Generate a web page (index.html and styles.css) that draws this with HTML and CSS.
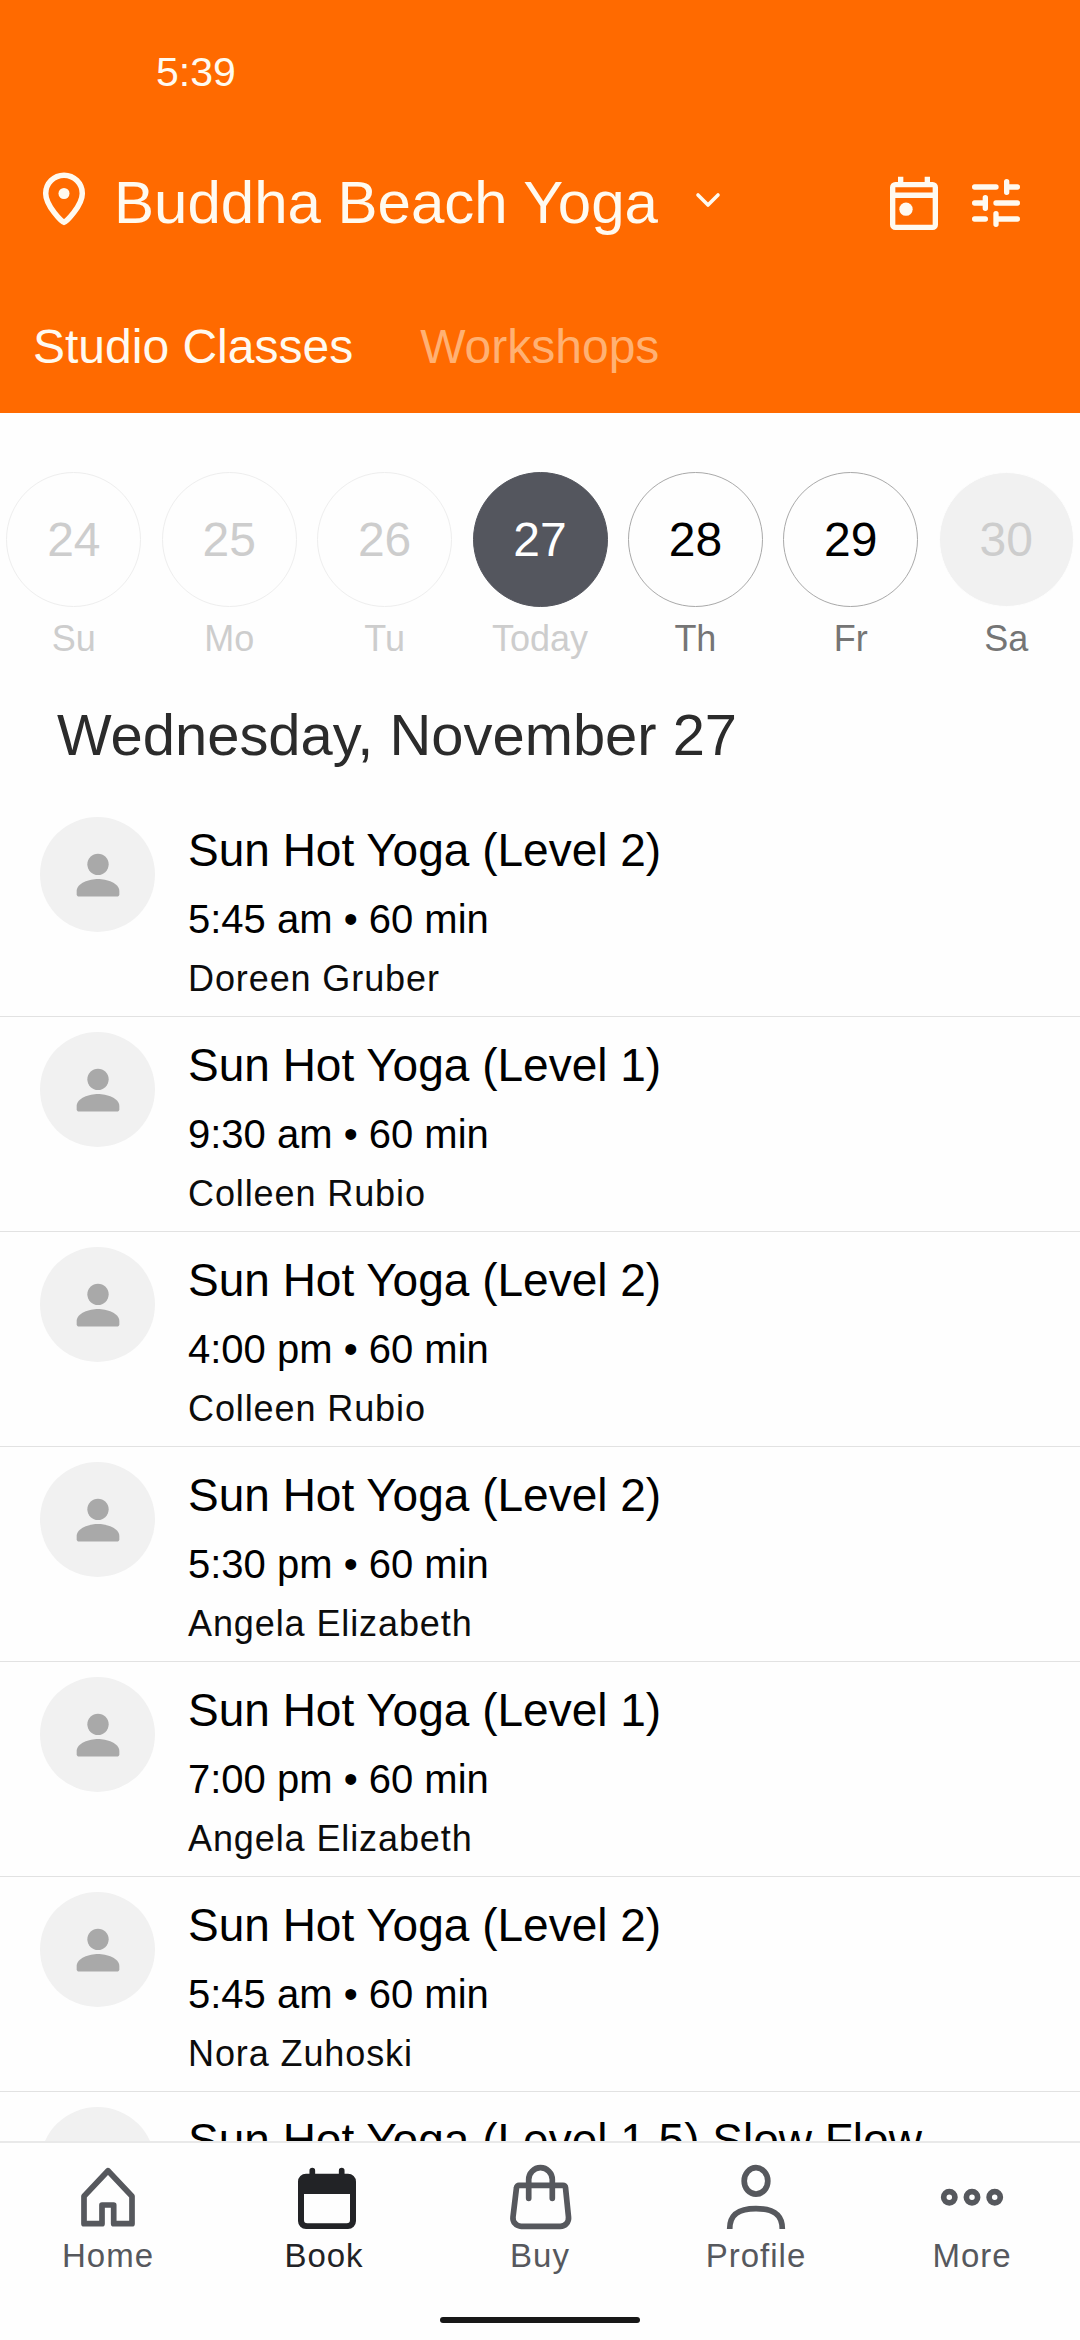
FILE: index.html
```html
<!DOCTYPE html>
<html lang="en">
<head>
<meta charset="utf-8">
<title>Buddha Beach Yoga</title>
<link rel="stylesheet" href="styles.css">
</head>
<body>
<svg class="defs" aria-hidden="true">
  <symbol id="person" viewBox="0 0 24 24">
    <circle cx="12" cy="8" r="4"/>
    <path d="M12 13.500c-3.200 0-8 1.500-8 4.500v1.200c0 .5.4.9.9.9h14.200c.5 0 .9-.4.9-.9V18c0-3-4.800-4.500-8-4.500z"/>
  </symbol>
</svg>
<div class="screen">
  <header class="header">
    <div class="status">5:39</div>
    <div class="title-row">
      <svg class="pin" viewBox="0 0 48 58"><path d="M24 50.500C22.500 50.500 5.700 34 5.700 21.500a18.300 18.300 0 0 1 36.600 0C42.300 34 25.500 50.500 24 50.500z" fill="none" stroke="currentColor" stroke-width="5.500"/><circle cx="24" cy="21.500" r="5.500" fill="currentColor"/></svg>
      <h1 class="studio">Buddha Beach Yoga</h1>
      <svg class="chevron" viewBox="0 0 30 20"><path d="M5 5l10 10L25 5" fill="none" stroke="currentColor" stroke-width="3.600" stroke-linecap="round" stroke-linejoin="round"/></svg>
      <svg class="action calendar" viewBox="0 0 24 24" fill="currentColor"><path fill-rule="evenodd" d="M19 3h-1V1h-2v2H8V1H6v2H5a2 2 0 0 0-2 2v14a2 2 0 0 0 2 2h14a2 2 0 0 0 2-2V5a2 2 0 0 0-2-2zM5 5h14v1.900H5zM5 9h14v10H5z"/><circle cx="9" cy="13.200" r="2.500"/></svg>
      <svg class="action" viewBox="0 0 24 24" fill="none" stroke="currentColor" stroke-width="2" stroke-linecap="round"><path d="M4 6h8M16 4v4M16 6h4M4 12h4M8 10v4M12 12h8M4 18h4M12 16v4M12 18h8"/></svg>
    </div>
    <nav class="tabs"><span>Studio Classes</span><span class="tab-off">Workshops</span></nav>
  </header>

  <section class="week">
    <div class="day past"><b>24</b><span>Su</span></div>
    <div class="day past"><b>25</b><span>Mo</span></div>
    <div class="day past"><b>26</b><span>Tu</span></div>
    <div class="day today"><b>27</b><span>Today</span></div>
    <div class="day"><b>28</b><span>Th</span></div>
    <div class="day"><b>29</b><span>Fr</span></div>
    <div class="day closed"><b>30</b><span>Sa</span></div>
  </section>

  <h2 class="date">Wednesday, November 27</h2>

  <main class="list">
    <article class="row"><div class="avatar"><svg><use href="#person"/></svg></div><div class="info"><h3>Sun Hot Yoga (Level 2)</h3><p class="time">5:45 am • 60 min</p><p class="teacher">Doreen Gruber</p></div></article>
    <article class="row"><div class="avatar"><svg><use href="#person"/></svg></div><div class="info"><h3>Sun Hot Yoga (Level 1)</h3><p class="time">9:30 am • 60 min</p><p class="teacher">Colleen Rubio</p></div></article>
    <article class="row"><div class="avatar"><svg><use href="#person"/></svg></div><div class="info"><h3>Sun Hot Yoga (Level 2)</h3><p class="time">4:00 pm • 60 min</p><p class="teacher">Colleen Rubio</p></div></article>
    <article class="row"><div class="avatar"><svg><use href="#person"/></svg></div><div class="info"><h3>Sun Hot Yoga (Level 2)</h3><p class="time">5:30 pm • 60 min</p><p class="teacher">Angela Elizabeth</p></div></article>
    <article class="row"><div class="avatar"><svg><use href="#person"/></svg></div><div class="info"><h3>Sun Hot Yoga (Level 1)</h3><p class="time">7:00 pm • 60 min</p><p class="teacher">Angela Elizabeth</p></div></article>
    <article class="row"><div class="avatar"><svg><use href="#person"/></svg></div><div class="info"><h3>Sun Hot Yoga (Level 2)</h3><p class="time">5:45 am • 60 min</p><p class="teacher">Nora Zuhoski</p></div></article>
    <article class="row"><div class="avatar"></div><div class="info"><h3>Sun Hot Yoga (Level 1.5) Slow Flow</h3></div></article>
  </main>

  <footer class="bottom">
    <nav class="nav">
      <div class="item"><svg viewBox="0 0 72 72"><path d="M36 10.700L60 36.300V63.700H41.700V45H30V63.700H12V36.300z"/></svg><span>Home</span></div>
      <div class="item active"><svg viewBox="0 0 72 72"><path class="solid" fill-rule="evenodd" d="M18 13.700h42a8 8 0 0 1 8 8V61a8 8 0 0 1-8 8H18a8 8 0 0 1-8-8V21.700a8 8 0 0 1 8-8zM16 34v26a3.300 3.300 0 0 0 3.300 3.300h39.400a3.300 3.300 0 0 0 3.300-3.300V34z"/><path d="M24.300 10.700v6M53.700 10.700v6"/></svg><span>Book</span></div>
      <div class="item"><svg viewBox="0 0 72 72"><path d="M24.700 38.300V19.500a11.800 11.800 0 0 1 23.600 0V38.300M15.300 25.300H59a2.500 2.500 0 0 1 2.500 2.300L64.500 57a8.300 8.300 0 0 1-8.300 9.300H17.200A8.300 8.300 0 0 1 9 57L12.500 27.600a2.500 2.500 0 0 1 2.800-2.300z"/></svg><span>Buy</span></div>
      <div class="item"><svg class="butt" viewBox="0 0 72 72"><ellipse cx="36" cy="20.900" rx="11.800" ry="13.200"/><path d="M9.700 69C9.700 54 19 48.700 36 48.700S62.300 54 62.300 69"/></svg><span>Profile</span></div>
      <div class="item"><svg viewBox="0 0 72 72"><circle cx="13.300" cy="37.300" r="5.600"/><circle cx="36" cy="37.300" r="5.600"/><circle cx="58.700" cy="37.300" r="5.600"/></svg><span>More</span></div>
    </nav>
    <div class="handle"></div>
  </footer>
</div>
</body>
</html>
```
FILE: styles.css
```css
* { box-sizing: border-box; margin: 0; padding: 0; }
body { background: #fefefe; font-family: "Liberation Sans", Arial, sans-serif; color: #000; }
h1, h2, h3, b { font-weight: 400; }
svg { display: block; flex: none; }
.defs { display: none; }
.screen { width: 1080px; height: 2340px; overflow: hidden; display: flex; flex-direction: column; white-space: nowrap; }

.header { height: 413px; flex: none; background: #ff6a00; color: #fffaf0; }
.status { height: 144px; padding-left: 156px; font-size: 41px; line-height: 144px; }
.title-row { height: 116px; padding: 0 52px 0 40px; display: flex; align-items: center; }
.pin { width: 48px; height: 58px; margin-bottom: 2px; }
.studio { margin-left: 26px; padding-top: 2px; font-size: 60px; line-height: 114px; }
.chevron { width: 30px; height: 20px; margin: 0 auto 4px 35px; }
.action { width: 64px; height: 64px; margin-top: 1px; }
.calendar { margin: 7px 18px 0 0; }
.tabs { height: 133px; margin-top: 20px; padding-left: 33px; display: flex; gap: 67px; font-size: 48px; line-height: 134px; }
.tab-off { color: #ffb173; }

.week { flex: none; padding-top: 59px; display: flex; justify-content: center; gap: 20.4px; }
.day { width: 135px; display: flex; flex-direction: column; align-items: center; gap: 10px; color: #757575; }
.day b { width: 135px; height: 135px; border: 1px solid #a9a9a9; border-radius: 50%; font-size: 48px; line-height: 133px; text-align: center; color: #000; }
.day span { font-size: 36px; line-height: 44px; }
.past, .today { color: #cdcdcd; }
.past b { color: #cdcdcd; border-color: #eee; }
.today b { background: #54565e; border-color: #54565e; color: #fff; }
.closed b { background: #f1f1f1; border-color: #fefefe; color: #cdcdcd; }

.date { flex: none; padding: 8px 0 1px 57px; font-size: 57.900px; line-height: 132px; color: #2b2b2b; }

.list { flex: 1; min-height: 0; overflow: hidden; }
.row { height: 215px; padding: 15px 40px 0; display: flex; gap: 33px; border-bottom: 1px solid #e2e2e2; }
.avatar { width: 115px; height: 115px; border-radius: 50%; background: #f1f1f1; display: flex; align-items: center; justify-content: center; }
.avatar svg { width: 64px; height: 64px; fill: #a9a9a9; }
.info { padding-top: 3px; display: flex; flex-direction: column; gap: 10px; }
.info h3 { font-size: 46px; line-height: 60px; }
.time { font-size: 40px; line-height: 58px; }
.teacher { margin-top: 1px; font-size: 36px; line-height: 40px; letter-spacing: .9px; color: #0c0c0c; }

.bottom { flex: none; height: 199px; border-top: 2px solid #e9e9e9; background: #fefefe; display: flex; flex-direction: column; align-items: center; }
.nav { width: 100%; height: 174px; padding-top: 17px; display: flex; }
.item { width: 216px; display: flex; flex-direction: column; align-items: center; color: #56585d; }
.item svg { width: 72px; height: 72px; fill: none; stroke: currentColor; stroke-width: 5.700; stroke-linecap: round; stroke-linejoin: round; }
.item .butt { stroke-linecap: butt; }
.item .solid { fill: currentColor; stroke: none; }
.item span { margin-top: 1px; font-size: 33px; line-height: 46px; letter-spacing: 1px; }
.active { color: #222326; }
.handle { width: 200px; height: 6px; border-radius: 3px; background: #171717; }
```
